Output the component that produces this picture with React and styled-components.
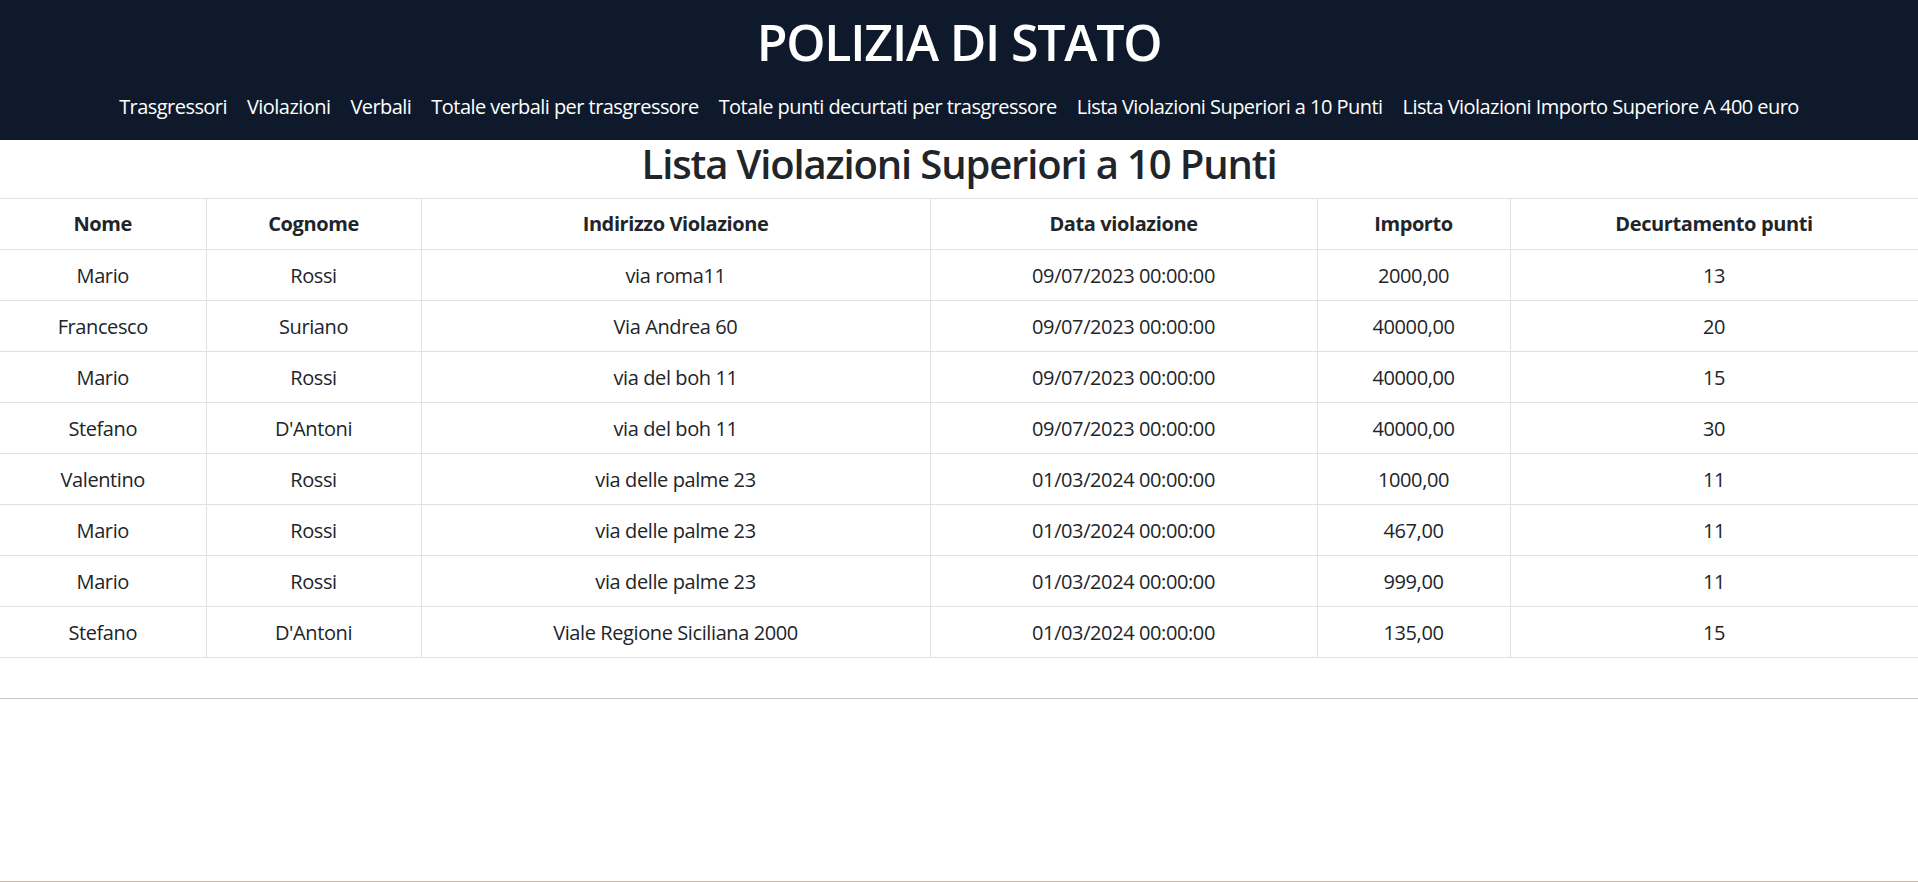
import React from "react";
import styled, { createGlobalStyle } from "styled-components";

const Global = createGlobalStyle`
  html, body { margin: 0; padding: 0; background: #fff; }
  body {
    font-family: "Open Sans", "Noto Sans", "Liberation Sans", sans-serif;
    font-size: 20px;
    line-height: 1.5;
    color: #212529;
  }
  * { box-sizing: border-box; }
`;

const Page = styled.div`
  min-height: 882px;
  display: flex;
  flex-direction: column;
`;

const Header = styled.header`
  background: #0e1a2b;
  padding: 12px 0 8px;
  display: flex;
  flex-direction: column;
  align-items: center;
`;

const Brand = styled.h1`
  margin: 0 0 10px;
  font-size: 50px;
  line-height: 60px;
  font-weight: 600;
  color: #fff;
  letter-spacing: -1.2px;
`;

const Nav = styled.nav`
  display: flex;
  justify-content: center;
`;

const NavLink = styled.a`
  color: #fff;
  text-decoration: none;
  padding: 10px 10px;
  line-height: 30px;
  font-size: 20px;
  letter-spacing: -0.55px;
  white-space: nowrap;
  cursor: pointer;
`;

const Main = styled.main`
  flex: 1;
`;

const Title = styled.h2`
  margin: 0 0 10px;
  text-align: center;
  font-size: 40px;
  line-height: 48px;
  font-weight: 600;
  letter-spacing: -1.15px;
`;

const Table = styled.table`
  width: 1918px;
  border-collapse: collapse;
  table-layout: fixed;
`;

const Th = styled.th`
  border: 1px solid #dee2e6;
  padding: 10px;
  line-height: 30px;
  font-weight: 700;
  text-align: center;
  font-size: 20px;
  letter-spacing: -0.4px;
  &:first-child { border-left: none; }
`;

const Td = styled.td`
  border: 1px solid #dee2e6;
  padding: 11px 10px 9px;
  line-height: 30px;
  text-align: center;
  font-size: 20px;
  letter-spacing: -0.4px;
  &:first-child { border-left: none; }
`;

const Rule = styled.hr`
  margin: 40px 0 0;
  border: 0;
  border-top: 1px solid #cacaca;
`;

const Footer = styled.footer`
  border-top: 1px solid #c2bab2;
  height: 1px;
`;

const links = [
  "Trasgressori",
  "Violazioni",
  "Verbali",
  "Totale verbali per trasgressore",
  "Totale punti decurtati per trasgressore",
  "Lista Violazioni Superiori a 10 Punti",
  "Lista Violazioni Importo Superiore A 400 euro",
];

const cols = [206, 215, 509, 387, 193, 408];
const heads = ["Nome", "Cognome", "Indirizzo Violazione", "Data violazione", "Importo", "Decurtamento punti"];

const rows = [
  ["Mario", "Rossi", "via roma11", "09/07/2023 00:00:00", "2000,00", "13"],
  ["Francesco", "Suriano", "Via Andrea 60", "09/07/2023 00:00:00", "40000,00", "20"],
  ["Mario", "Rossi", "via del boh 11", "09/07/2023 00:00:00", "40000,00", "15"],
  ["Stefano", "D'Antoni", "via del boh 11", "09/07/2023 00:00:00", "40000,00", "30"],
  ["Valentino", "Rossi", "via delle palme 23", "01/03/2024 00:00:00", "1000,00", "11"],
  ["Mario", "Rossi", "via delle palme 23", "01/03/2024 00:00:00", "467,00", "11"],
  ["Mario", "Rossi", "via delle palme 23", "01/03/2024 00:00:00", "999,00", "11"],
  ["Stefano", "D'Antoni", "Viale Regione Siciliana 2000", "01/03/2024 00:00:00", "135,00", "15"],
];

export default function App() {
  return (
    <>
      <Global />
      <Page>
        <Header>
          <Brand>POLIZIA DI STATO</Brand>
          <Nav>
            {links.map((l) => (
              <NavLink key={l}>{l}</NavLink>
            ))}
          </Nav>
        </Header>
        <Main>
          <Title>Lista Violazioni Superiori a 10 Punti</Title>
          <Table>
            <colgroup>
              {cols.map((w, i) => (
                <col key={i} style={{ width: w }} />
              ))}
            </colgroup>
            <thead>
              <tr>
                {heads.map((h) => (
                  <Th key={h}>{h}</Th>
                ))}
              </tr>
            </thead>
            <tbody>
              {rows.map((r, i) => (
                <tr key={i}>
                  {r.map((c, j) => (
                    <Td key={j}>{c}</Td>
                  ))}
                </tr>
              ))}
            </tbody>
          </Table>
          <Rule />
        </Main>
        <Footer />
      </Page>
    </>
  );
}
